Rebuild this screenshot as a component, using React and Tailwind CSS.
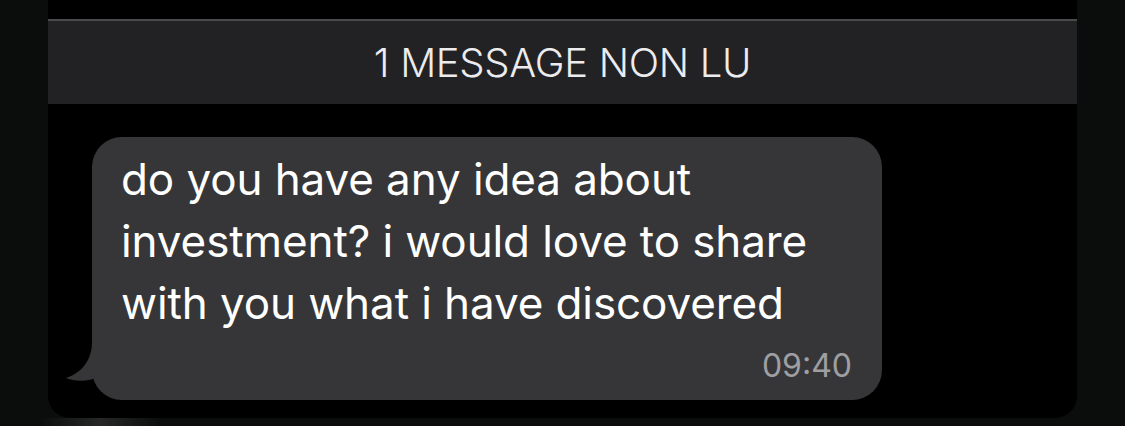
export default function App() {
  return (
    <div className="w-[1125px] h-[426px] bg-[#0b0c0c] flex justify-center overflow-hidden relative" style={{ fontFamily: "Inter, 'Noto Sans', sans-serif" }}>
      <div className="absolute left-[40px] bottom-0 w-[120px] h-[8px] bg-gradient-to-r from-transparent via-[#3a3a3a] to-transparent opacity-60" />
      <div className="w-[1029px] h-[418px] bg-black rounded-b-[22px] pt-[19px] relative">
        <div className="h-[85px] border-t-2 border-[#4a4a4c] bg-[#222225] flex items-center justify-center">
          <span className="text-[40px] font-light text-[#ececee] tracking-[-0.3px] leading-none">1 MESSAGE NON LU</span>
        </div>
        <div className="pl-[44px] pt-[33px]">
          <div className="relative w-[790px] rounded-[30px] bg-[#363638] pl-[29px] pr-[30px] pt-[11px] pb-[18px]">
            <svg className="absolute left-[-26px] bottom-[8px]" width="60" height="50" viewBox="0 0 60 50">
              <path d="M26 0 C26 16 18 30 0 36 C10 40 22 40 34 34 L60 34 L60 0 Z" fill="#363638" />
            </svg>
            <p className="relative text-[44px] leading-[62px] text-white tracking-[-0.1px]">
              do you have any idea about<br />investment? i would love to share<br />with you what i have discovered
            </p>
            <div className="relative mt-[16px] text-right text-[32px] leading-[32px] text-[#9f9fa3]">09:40</div>
          </div>
        </div>
      </div>
    </div>
  );
}
